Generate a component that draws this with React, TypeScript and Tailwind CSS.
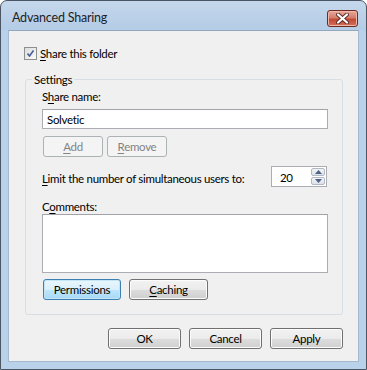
import type { ReactNode } from 'react'

const FONT = "font-['Lato','Noto_Sans',sans-serif]"

function Btn({ children, w, primary, disabled }: { children: ReactNode; w: string; primary?: boolean; disabled?: boolean }) {
  const tone = disabled
    ? 'border-[#adb2b5] bg-[#f4f4f4] text-[#838383]'
    : primary
      ? 'border-[#3c7fb1] bg-[linear-gradient(#eaf6fd_0%,#d9f0fc_50%,#bee6fd_51%,#a7d9f5_100%)] text-black shadow-[inset_0_0_0_1px_#c4e5f6]'
      : 'border-[#707070] bg-[linear-gradient(#f2f2f2_0%,#ebebeb_50%,#dddddd_51%,#cfcfcf_100%)] text-black shadow-[inset_0_0_0_1px_#fcfcfc]'
  return (
    <div className={`${w} h-[21px] rounded-[3px] border flex items-center justify-center ${tone}`}>
      <span className="leading-[15px]">{children}</span>
    </div>
  )
}

function CheckBox() {
  return (
    <div className="w-[13px] h-[13px] border border-[#8e8f8f] bg-[linear-gradient(135deg,#dcdcdc,#fbfbfb)] p-[2px]">
      <svg width="7" height="7" viewBox="0 0 7 7" className="block">
        <path d="M0.5 3.5 L2.5 6 L6.5 0.5" fill="none" stroke="#4a5f97" strokeWidth="1.6" />
      </svg>
    </div>
  )
}

function Spinner() {
  return (
    <div className="w-[56px] h-[21px] border border-[#abadb3] bg-white flex items-center">
      <span className="flex-1 pl-[8px] leading-[15px] pt-[1px]">20</span>
      <div className="w-[15px] h-full flex flex-col gap-[1px] py-[1px] pr-[1px]">
        <div className="flex-1 border border-[#b0b9c5] bg-[linear-gradient(#f3f3f3,#dde2ea)] rounded-[2px] flex items-center justify-center">
          <svg width="7" height="4" viewBox="0 0 7 4"><path d="M0 4 L3.5 0 L7 4 Z" fill="#4d6185" /></svg>
        </div>
        <div className="flex-1 border border-[#b0b9c5] bg-[linear-gradient(#f3f3f3,#dde2ea)] rounded-[2px] flex items-center justify-center">
          <svg width="7" height="4" viewBox="0 0 7 4"><path d="M0 0 L3.5 4 L7 0 Z" fill="#4d6185" /></svg>
        </div>
      </div>
    </div>
  )
}

export default function App() {
  return (
    <div className={`w-[367px] h-[370px] rounded-t-[7px] border border-[#4a5663] bg-[linear-gradient(#c4d7ec_0px,#b5cce6_28px,#b9d1ea_30px,#bad1ea_100%)] flex flex-col text-[11.5px] tracking-[-0.3px] text-black ${FONT}`}>
      {/* Title bar */}
      <div className="h-[29px] flex items-start justify-between pl-[11px] pr-[8px]">
        <span className="mt-[9px] leading-[15px] text-[#1e1e1e] text-[12.5px] tracking-[-0.2px]">Advanced Sharing</span>
        <div className="mt-[9px] w-[31px] h-[17px] rounded-[3px] border border-[#6b2a22] bg-[linear-gradient(#e8a89c_0%,#d47d6c_45%,#c24a36_55%,#d2705c_100%)] flex items-center justify-center shadow-[inset_0_0_0_1px_#f0b7a8]">
          <svg width="13" height="11" viewBox="0 0 13 11">
            <path d="M2 1.5 L11 9.5 M11 1.5 L2 9.5" stroke="#5a2a24" strokeWidth="4" strokeLinecap="round" />
            <path d="M2 1.5 L11 9.5 M11 1.5 L2 9.5" stroke="#ffffff" strokeWidth="2.2" strokeLinecap="round" />
          </svg>
        </div>
      </div>

      {/* Client area */}
      <div className="mx-[7px] mb-[7px] flex-1 bg-[#f0f0f0] border border-[#a4b8cf] border-t-[#93a8bf] flex flex-col px-[15px]">
        <div className="mt-[15px] flex items-center gap-[3px]">
          <CheckBox />
          <span className="leading-[15px]"><u className="underline-offset-2">S</u>hare this folder</span>
        </div>

        <fieldset className="mt-[11px] ml-[1px] min-w-0 h-[243px] border border-[#d5dfe5] rounded-[3px] pl-[16px] pr-[14px]">
          <legend className="ml-[-10px] px-[2px] leading-[15px]">Settings</legend>
          <div className="mt-[2px] leading-[15px]">S<u className="underline-offset-2">h</u>are name:</div>
          <div className="mt-[5px] h-[20px] border border-[#abadb3] border-t-[#a0a3a9] bg-white flex items-center pl-[4px]">
            <span className="leading-[15px]">Solvetic</span>
          </div>
          <div className="mt-[7px] flex gap-[4px] ml-[1px]">
            <Btn w="w-[60px]" disabled><u className="underline-offset-2">A</u>dd</Btn>
            <Btn w="w-[60px]" disabled><u className="underline-offset-2">R</u>emove</Btn>
          </div>
          <div className="mt-[9px] flex items-center justify-between">
            <span className="leading-[15px] mt-[3px] whitespace-nowrap"><u className="underline-offset-2">L</u>imit the number of simultaneous users to:</span>
            <div className="mr-[1px]"><Spinner /></div>
          </div>
          <div className="mt-[12px] leading-[15px]">C<u className="underline-offset-2">o</u>mments:</div>
          <div className="mt-[0px] h-[59px] border border-[#abadb3] border-t-[#a0a3a9] bg-white" />
          <div className="mt-[6px] flex gap-[8px] ml-[1px]">
            <Btn w="w-[78px]" primary>Permissions</Btn>
            <Btn w="w-[79px]"><u className="underline-offset-2">C</u>aching</Btn>
          </div>
        </fieldset>

        <div className="mt-[13px] flex justify-end gap-[8px]">
          <Btn w="w-[73px]">OK</Btn>
          <Btn w="w-[73px]">Cancel</Btn>
          <Btn w="w-[73px]">Apply</Btn>
        </div>
      </div>
    </div>
  )
}
